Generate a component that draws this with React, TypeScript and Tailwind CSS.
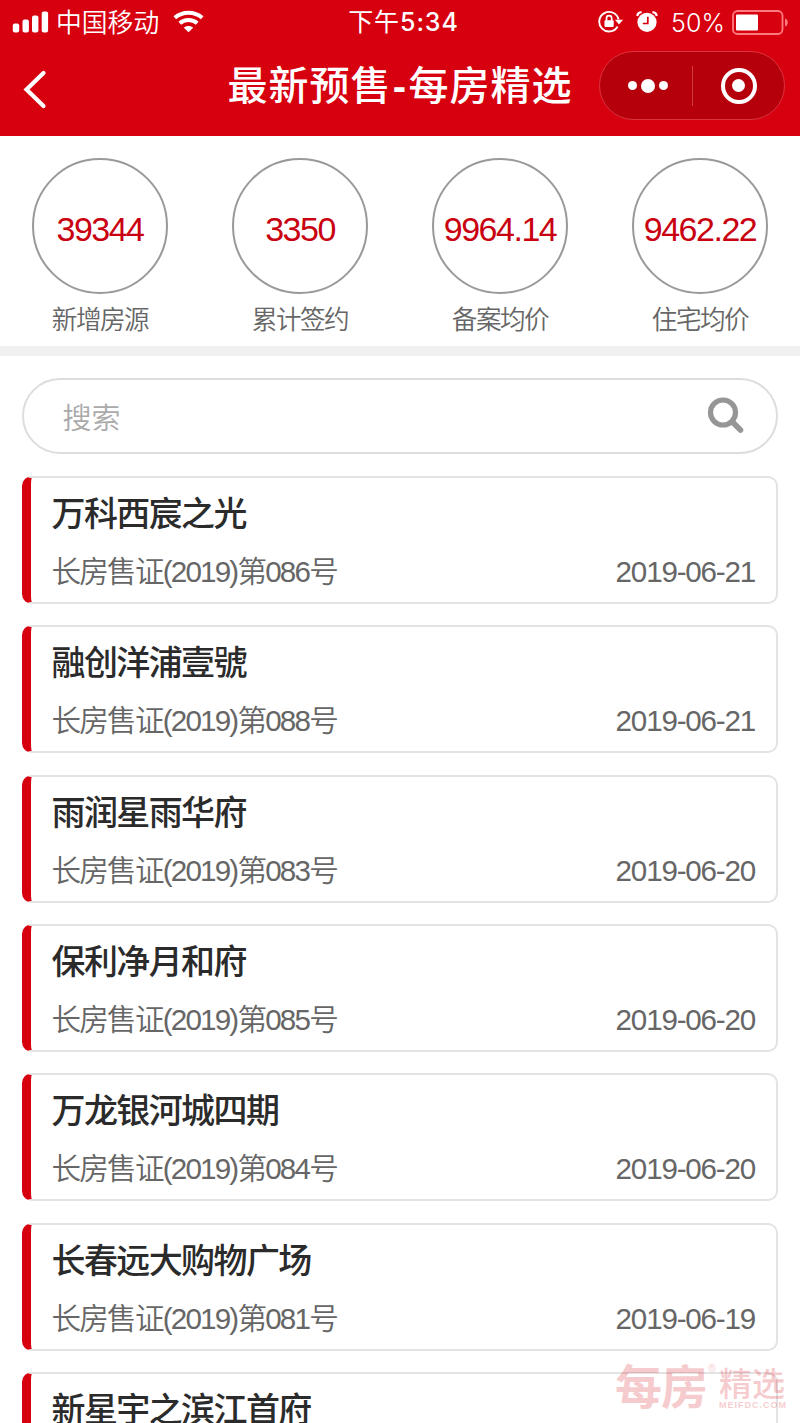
interface Stat {
  value: string;
  label: string;
}

interface Presale {
  name: string;
  permit?: string;
  date?: string;
}

const stats: Stat[] = [
  { value: '39344', label: '新增房源' },
  { value: '3350', label: '累计签约' },
  { value: '9964.14', label: '备案均价' },
  { value: '9462.22', label: '住宅均价' },
];

const presales: Presale[] = [
  { name: '万科西宸之光', permit: '长房售证(2019)第086号', date: '2019-06-21' },
  { name: '融创洋浦壹號', permit: '长房售证(2019)第088号', date: '2019-06-21' },
  { name: '雨润星雨华府', permit: '长房售证(2019)第083号', date: '2019-06-20' },
  { name: '保利净月和府', permit: '长房售证(2019)第085号', date: '2019-06-20' },
  { name: '万龙银河城四期', permit: '长房售证(2019)第084号', date: '2019-06-20' },
  { name: '长春远大购物广场', permit: '长房售证(2019)第081号', date: '2019-06-19' },
  { name: '新星宇之滨江首府' },
];

function StatusBar() {
  return (
    <div className="grid h-11 grid-cols-3 items-center font-['Inter','Noto_Sans_CJK_SC',sans-serif] text-[25px] leading-none">
      <div className="flex items-center pl-3">
        <svg width="37" height="24" viewBox="0 0 37 24" fill="currentColor">
          <rect x="0.8" y="13.5" width="6.4" height="9" rx="2" />
          <rect x="10.5" y="9.5" width="6.4" height="13" rx="2" />
          <rect x="20" y="5.5" width="6.4" height="17" rx="2" />
          <rect x="29.7" y="1.5" width="6.4" height="21" rx="2" />
        </svg>
        <span className="ml-[7px] pt-px text-[25.8px] font-[350]">中国移动</span>
        <svg className="ml-[14px]" width="32" height="24" viewBox="0 0 32 24" fill="none" stroke="currentColor" strokeWidth="4">
          <path d="M1.8 7.7C9.5 1 21.5 1 29.2 7.7" />
          <path d="M6.8 13.2C11.5 9 19.5 9 24.2 13.2" />
          <path d="M15.5 22.3L10.8 17.8C13 15.4 18 15.4 20.2 17.8Z" fill="currentColor" stroke="none" />
        </svg>
      </div>

      <div className="pl-[7px] text-center text-[25px] font-medium tracking-[0.9px]">
        <span className="font-normal">下午</span>5:34
      </div>

      <div className="flex items-center justify-end pr-[11px]">
        {/* Rotation lock */}
        <svg width="25" height="24" viewBox="0 0 25 24" fill="none" stroke="currentColor" strokeWidth="1.9">
          <path d="M19.6 16.5A9.8 9.8 0 1 1 20.6 9.5" />
          <path d="M17 9.8H25L21 14.6Z" fill="currentColor" stroke="none" />
          <rect x="6.5" y="10.3" width="9.2" height="6.8" rx="1" fill="currentColor" stroke="none" />
          <path d="M8.5 11V8.2A2.6 2.6 0 0 1 13.7 8.2V11" strokeWidth="1.7" />
        </svg>
        {/* Alarm */}
        <svg className="ml-[13px]" width="22" height="24" viewBox="0 0 22 24" fill="none" stroke="currentColor">
          <circle cx="11" cy="12.3" r="9.6" fill="currentColor" stroke="none" />
          <path d="M1.3 6C1.6 3.6 3 2.4 5.6 2.2M20.7 6C20.4 3.6 19 2.4 16.4 2.2" strokeWidth="2.2" />
          <path d="M11.8 6.8V13.5H6.8" stroke="#d7000f" strokeWidth="1.7" />
        </svg>
        <span className="ml-[13px] pt-0.5 text-[25px] font-light tracking-[0.1px]">50%</span>
        <svg className="ml-[7px]" width="57" height="25" viewBox="0 0 57 25" fill="none">
          <rect x="1" y="1" width="49.5" height="23" rx="4.5" stroke="#ff7a80" strokeWidth="1.8" />
          <rect x="4" y="4.5" width="22" height="16" rx="1" fill="#fff" />
          <path d="M53 8.5C56.7 9.5 56.7 15.5 53 16.5Z" fill="#ff7a80" />
        </svg>
      </div>
    </div>
  );
}

function NavBar() {
  return (
    <div className="grid h-[92px] grid-cols-[200px_1fr_200px]">
      <div className="pt-[25px] pl-[23px]">
        <svg width="26" height="42" viewBox="0 0 26 42" fill="none" stroke="currentColor" strokeWidth="4.2" strokeLinecap="round">
          <path d="M20.5 4L3.5 20.5L20.5 37" />
        </svg>
      </div>
      <h1 className="mt-[10px] text-center text-[40px] leading-[64px] font-medium tracking-[1px] whitespace-nowrap">
        最新预售<span className="inline-block w-[17px] text-center font-bold">-</span>每房精选
      </h1>
      <div className="mt-[7px] ml-[-1px] flex h-[69px] w-[186px] items-center rounded-full border border-[#db3540] bg-[#b5000c]">
        <div className="flex w-[92px] items-center justify-center gap-1 pl-1">
          <span className="size-[9px] rounded-full bg-white" />
          <span className="size-[14px] rounded-full bg-white" />
          <span className="size-[9px] rounded-full bg-white" />
        </div>
        <span className="h-10 w-px bg-[#cf3a43]" />
        <div className="flex flex-1 justify-center">
          <span className="flex size-9 items-center justify-center rounded-full border-4 border-white">
            <span className="size-[13px] rounded-full bg-white" />
          </span>
        </div>
      </div>
    </div>
  );
}

function StatItem({ value, label }: Stat) {
  return (
    <div className="flex flex-col items-center">
      <div className="flex size-[136px] items-center justify-center rounded-full border-2 border-[#999] pt-[7px] text-[34px] tracking-[-1.5px] text-[#c9000f]">
        {value}
      </div>
      <div className="mt-[8px] text-[25.6px] leading-9 font-[350] tracking-[-1.5px] text-[#666]">{label}</div>
    </div>
  );
}

function PresaleCard({ name, permit, date }: Presale) {
  return (
    <div className="h-32 shrink-0 rounded-[10px] border-2 border-l-[9px] border-[#e3e3e3] border-l-[#d7000f] pt-[11px] pr-[21px] pl-[20.5px]">
      <h2 className="text-[34px] leading-[50px] font-medium tracking-[-1.6px] text-[#2b2b2b]">{name}</h2>
      {permit && (
        <div className="mt-[9px] flex items-center justify-between text-[29.6px] leading-[48px] text-[#666]">
          <span className="font-[350] tracking-[-1.8px]">{permit}</span>
          <span className="tracking-[-1.2px]">{date}</span>
        </div>
      )}
    </div>
  );
}

function Watermark() {
  return (
    <div className="absolute right-[14px] bottom-3 flex h-12 items-end text-[#d7000f] opacity-20">
      <div className="w-[93px] text-[47px] leading-[47px] font-bold tracking-[-1px] whitespace-nowrap">每房</div>
      <span className="w-[11px] self-start text-[11px] leading-[10px]">®</span>
      <div className="w-[67px]">
        <div className="text-[33px] leading-[31px] font-medium whitespace-nowrap">精选</div>
        <div className="font-['Liberation_Sans',sans-serif] text-[9px] leading-[11px] font-bold tracking-[1px]">MEIFDC.COM</div>
      </div>
    </div>
  );
}

export default function App() {
  return (
    <div className="relative h-[1423px] w-[800px] overflow-hidden bg-white font-['Liberation_Sans','Noto_Sans_CJK_SC',sans-serif]">
      <header className="bg-[#d7000f] text-white">
        <StatusBar />
        <NavBar />
      </header>

      {/* Market figures */}
      <section className="grid h-[220px] grid-cols-4 border-b-[10px] border-[#f0f0f0] pt-[22px]">
        {stats.map((stat) => (
          <StatItem key={stat.label} {...stat} />
        ))}
      </section>

      <main className="px-[22px] pt-[22px]">
        <div className="flex h-[76px] items-center justify-between rounded-full border-2 border-[#ddd] pr-[31px] pl-[38.5px]">
          <span className="pt-2 text-[29px] font-[350] text-[#aaa]">搜索</span>
          <svg width="38" height="38" viewBox="0 0 38 38" fill="none" stroke="#969696">
            <circle cx="16" cy="15.5" r="12.5" strokeWidth="5.2" />
            <path d="M26 25.5L33.5 33" strokeWidth="5.6" strokeLinecap="round" />
          </svg>
        </div>

        <div className="mt-[22px] flex flex-col gap-[21.35px]">
          {presales.map((item) => (
            <PresaleCard key={item.name} {...item} />
          ))}
        </div>
      </main>

      <Watermark />
    </div>
  );
}
